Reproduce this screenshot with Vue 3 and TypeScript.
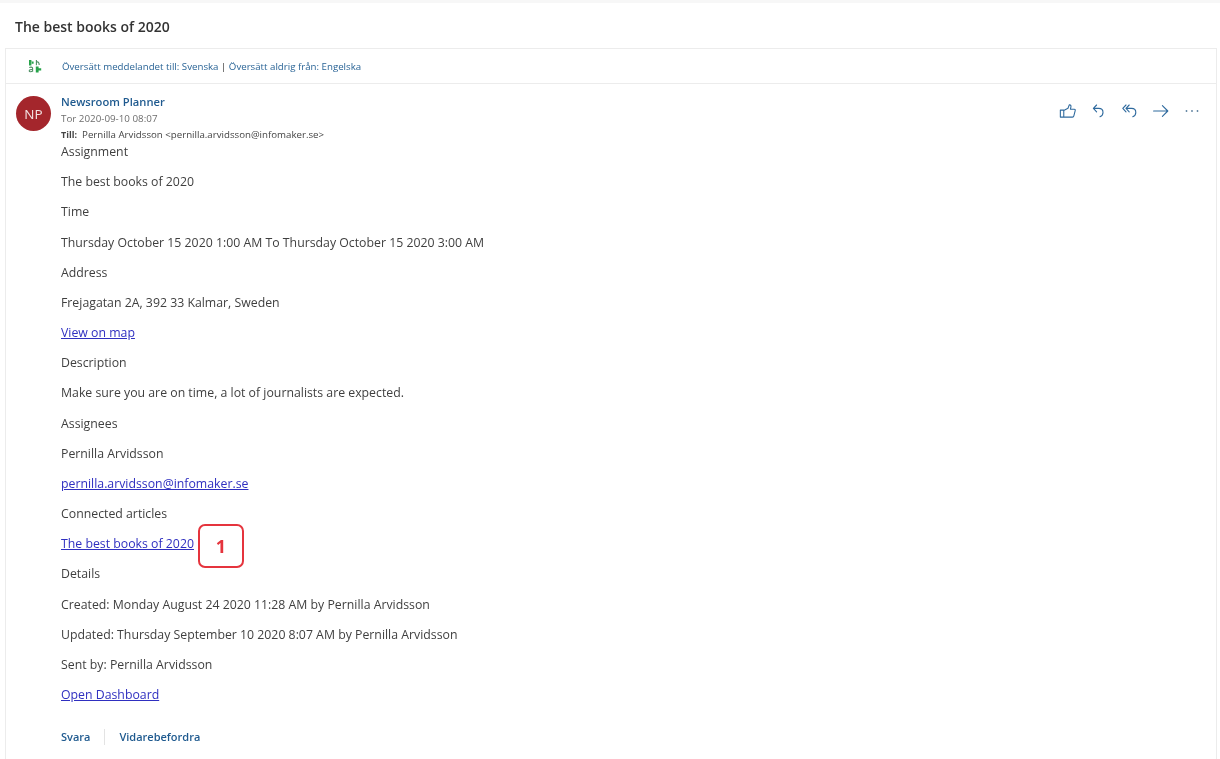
<script setup lang="ts">
interface Line { text: string; link?: boolean; mark?: string }
const lines: Line[] = [
  { text: 'Assignment' },
  { text: 'The best books of 2020' },
  { text: 'Time' },
  { text: 'Thursday October 15 2020 1:00 AM To Thursday October 15 2020 3:00 AM' },
  { text: 'Address' },
  { text: 'Frejagatan 2A, 392 33 Kalmar, Sweden' },
  { text: 'View on map', link: true },
  { text: 'Description' },
  { text: 'Make sure you are on time, a lot of journalists are expected.' },
  { text: 'Assignees' },
  { text: 'Pernilla Arvidsson' },
  { text: 'pernilla.arvidsson@infomaker.se', link: true },
  { text: 'Connected articles' },
  { text: 'The best books of 2020', link: true, mark: '1' },
  { text: 'Details' },
  { text: 'Created: Monday August 24 2020 11:28 AM by Pernilla Arvidsson' },
  { text: 'Updated: Thursday September 10 2020 8:07 AM by Pernilla Arvidsson' },
  { text: 'Sent by: Pernilla Arvidsson' },
  { text: 'Open Dashboard', link: true },
]
</script>

<template>
  <div class="page">
    <div class="topstrip"></div>
    <h1 class="subject">The best books of 2020</h1>
    <section class="card">
      <div class="translate">
        <svg class="tr-icon" width="14" height="14" viewBox="0 0 14 14">
          <path d="M1 1h2.4v1.6h2.2v2.2H3.4v1.8H1z" fill="#27a34a" />
          <path d="M3.4 2.6v2.2" stroke="#fff" stroke-width=".5" />
          <path d="M8.4 1v5.2M8.4 3c1.8-.6 2.8.4 2.8 3" fill="none" stroke="#4d8f63" stroke-width="1.1" />
          <path d="M1.4 8.8c.7-1 3.2-1 3.2.5v3.5M4.6 10.6c-2.3-.3-3.4.5-3.4 1.3 0 1.1 2.3 1.1 3.4 0" fill="none" stroke="#4d8f63" stroke-width="1.1" />
          <path d="M7.8 7.4h2.8v1.8h2.6v2.4h-2.6v1.8H7.8z" fill="#27a34a" />
        </svg>
        <span class="tr-text">Översätt meddelandet till: Svenska <span class="tr-sep">|</span> Översätt aldrig från: Engelska</span>
      </div>
      <div class="message">
        <div class="avatar">NP</div>
        <div class="content">
          <div class="head">
            <div class="meta">
              <div class="sender">Newsroom Planner</div>
              <div class="date">Tor 2020-09-10 08:07</div>
              <div class="to"><b class="till">Till:</b>&nbsp; Pernilla Arvidsson &lt;pernilla.arvidsson@infomaker.se&gt;</div>
            </div>
            <div class="actions">
              <svg width="18" height="18" viewBox="0 0 20 20" fill="none" stroke="#2f6a9e" stroke-width="1.2" stroke-linejoin="round" stroke-linecap="round">
                <path d="M1.5 9h3.8v7.8H1.5zM5.3 9.4 10 7l1.4-3.8c1.6-.3 2.2 1 1.8 2.4L12.7 8H17c.9 0 1.2.7 1 1.5l-1.5 6c-.2.9-.8 1.3-1.5 1.3H5.3" />
              </svg>
              <svg width="18" height="18" viewBox="0 0 18 18" fill="none" stroke="#2f6a9e" stroke-width="1.1" stroke-linecap="round" stroke-linejoin="round">
                <path d="M6.6 3 3.4 6.4l3.2 3.4M3.4 6.4h5.4c2.6 0 4.2 1.8 4.2 4 0 2.2-1.3 3.6-3 4.4" />
              </svg>
              <svg width="18" height="18" viewBox="0 0 18 18" fill="none" stroke="#2f6a9e" stroke-width="1.1" stroke-linecap="round" stroke-linejoin="round">
                <path d="M5 3 1.8 6.4 5 9.8M8.2 3 5 6.4l3.2 3.4M5 6.4h5.6c2.6 0 4.2 1.8 4.2 4 0 2.2-1.3 3.6-3 4.4" />
              </svg>
              <svg width="18" height="18" viewBox="0 0 18 18" fill="none" stroke="#2f6a9e" stroke-width="1.1" stroke-linecap="round" stroke-linejoin="round">
                <path d="M1.6 9h14M10.4 3.6 15.8 9l-5.4 5.4" />
              </svg>
              <svg width="18" height="18" viewBox="0 0 18 18" fill="#5b7f9e">
                <circle cx="3.5" cy="9" r=".9" /><circle cx="9" cy="9" r=".9" /><circle cx="14.5" cy="9" r=".9" />
              </svg>
            </div>
          </div>
          <div class="body">
            <p v-for="(l, i) in lines" :key="i" class="line">
              <a v-if="l.link" href="#" class="link">{{ l.text }}</a>
              <template v-else>{{ l.text }}</template>
              <span v-if="l.mark" class="callout">{{ l.mark }}</span>
            </p>
          </div>
          <div class="reply">
            <span class="reply-btn first">Svara</span>
            <span class="reply-btn">Vidarebefordra</span>
          </div>
        </div>
      </div>
    </section>
  </div>
</template>

<style>
html, body { margin: 0; background: #fff; overflow: hidden; }
</style>

<style scoped>
.page {
  width: 1220px;
  height: 759px;
  overflow: hidden;
  font-family: "Open Sans", "Noto Sans", sans-serif;
  color: #323130;
  background: #fff;
  box-sizing: border-box;
  filter: blur(0.3px);
}
.topstrip { height: 3px; background: #f7f7f7; }
.subject {
  margin: 0;
  padding: 14px 0 12px 15px;
  font-size: 14px;
  line-height: 19px;
  font-weight: 600;
  color: #333;
}
.card {
  margin: 0 3px 0 5px;
  border: 1px solid #ececec;
  height: 760px;
  box-sizing: border-box;
}
.translate {
  display: flex;
  align-items: center;
  height: 34px;
  border-bottom: 1px solid #ececec;
  padding-left: 22px;
}
.tr-icon { flex: none; }
.tr-text {
  margin-left: 20px;
  padding-top: 1px;
  font-size: 9.7px;
  color: #2a6496;
}
.tr-sep { color: #333; }
.message { display: flex; padding: 12px 0 0 10px; }
.avatar {
  flex: none;
  width: 35px;
  height: 35px;
  border-radius: 50%;
  background: #a4262c;
  color: #f3e4e4;
  font-size: 13.5px;
  font-weight: 400;
  display: flex;
  align-items: center;
  justify-content: center;
}
.content { flex: 1; margin-left: 10px; min-width: 0; }
.head { display: flex; justify-content: space-between; }
.sender { font-size: 11.2px; line-height: 15px; font-weight: 600; color: #1f5a8f; margin-top: -2px; }
.date { font-size: 9.8px; line-height: 14px; color: #6e6e6e; margin-top: 3px; }
.to { font-size: 9.7px; line-height: 14px; color: #444; margin-top: 2px; }
.till { font-weight: 700; font-size: 9px; }
.actions { display: flex; gap: 13px; padding: 6px 15px 0 0; }
.body { margin-top: 1px; }
.line {
  margin: 0 0 12px;
  font-size: 12.3px;
  line-height: 18.17px;
  color: #3f3f3f;
  display: flex;
  align-items: center;
  position: relative;
}
.link { color: #2f2fc0; text-decoration: underline; }
.callout {
  position: absolute;
  left: 137px;
  top: -11px;
  width: 46px;
  height: 44px;
  box-sizing: border-box;
  border: 2px solid #e5343d;
  border-radius: 7px;
  background: #fff;
  color: #e5343d;
  font-weight: 700;
  font-size: 18px;
  display: flex;
  align-items: center;
  justify-content: center;
}
.reply { display: flex; align-items: center; margin-top: 25px; }
.reply-btn { font-size: 11px; line-height: 16px; font-weight: 600; color: #1f5a8f; }
.reply-btn.first { padding-right: 14px; margin-right: 14px; border-right: 1px solid #e3e3e3; }
</style>
